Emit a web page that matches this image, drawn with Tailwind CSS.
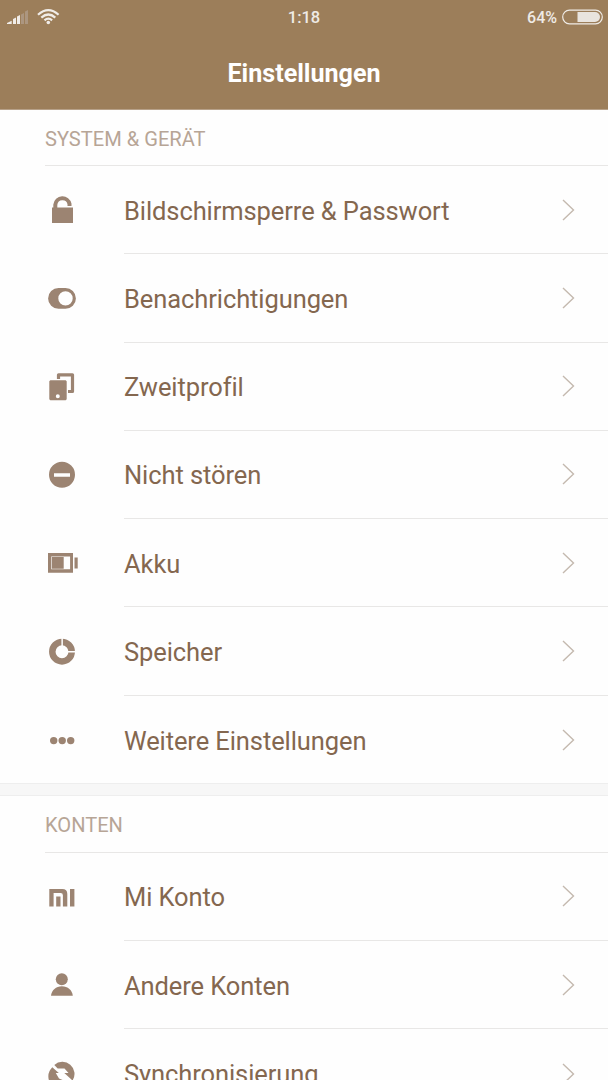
<!DOCTYPE html>
<html lang="de"><head><meta charset="utf-8"><title>Einstellungen</title>
<script src="https://cdn.jsdelivr.net/npm/@tailwindcss/browser@4"></script></head>
<body class="h-[1080px] w-[608px] overflow-hidden bg-[#fefefe] font-['Roboto',sans-serif] text-[#84674f]">
<header class="h-[110px] border-b border-[#b7a189] bg-[#9c7e5a] text-white">
  <div class="grid h-[34px] grid-cols-3 items-center text-[16.500px] font-medium text-[#efebe6]">
    <div class="flex items-center pl-[7px]">
      <svg class="h-[34px] w-[56px]" viewBox="7 0 56 34" fill="#f0ece8"><path d="M7 24v-1l4.700-2.300V24zM13 24v-5l3-1.500V24zM17 24v-7.500l3-1.500v9z"/><path fill="#ac9680" d="M21 24v-9.500l3-1.500v11zM25 24V11.500l3-1.500v14z"/><circle cx="48.300" cy="22.500" r="1.800"/><path fill="none" stroke="#f0ece8" stroke-width="2.200" d="M38 14.700Q48.300 5.400 58.600 14.700M41.300 17.600Q48.300 11.400 55.300 17.600M44.500 20.400Q48.300 16.800 52.100 20.400"/></svg>
    </div>
    <div class="pt-[2px] text-center">1:18</div>
    <div class="flex items-center justify-end gap-[5px] pr-[5px]"><span class="pt-px text-[16px]">64%</span>
      <svg class="h-[16px] w-[41px]" viewBox="0 0 41 16"><rect x=".7" y="1.200" width="39.600" height="13.600" rx="6.800" fill="none" stroke="#efebe6" stroke-width="1.200"/><path fill="#e9e4de" d="M15.500 3H33a5 5 0 0 1 0 10H15.500z"/></svg>
    </div>
  </div>
  <h1 class="pt-[21px] text-center text-[25.100px] leading-[38px] font-bold">Einstellungen</h1>
</header>
<main id="list"></main>
<script>
const icons = {
lock:'<path d="M8 15.500h21V31H8z"/><path fill="none" stroke="currentColor" stroke-width="4" d="M11.300 16v-3.300a7.200 7.200 0 0 1 14.200-.700V14"/>',
toggle:'<path fill-rule="evenodd" d="M14.500 8h7a10.400 10.400 0 0 1 0 20.800h-7a10.400 10.400 0 0 1 0-20.800zM21.500 11.200a7.200 7.200 0 1 0 0 14.400a7.200 7.200 0 0 0 0-14.400z"/>',
copy:'<path fill-rule="evenodd" d="M6.300 11.300h15.400l1 1v18l-1 1H6.300l-1-1v-18zM13.800 25.300a2 2 0 1 0 0 4a2 2 0 0 0 0-4z"/><path fill="none" stroke="currentColor" stroke-width="3.200" stroke-linejoin="round" d="M14.500 10V5.800h14v16.700H24"/>',
dnd:'<path fill-rule="evenodd" d="M18 4.800a13 13 0 1 0 0 26a13 13 0 0 0 0-26zM10 16.200h16v3.500H10z"/>',
battery:'<path fill-rule="evenodd" d="M4 8h25v19.700H4zM7.200 11.500v12.800h18.900V11.500z"/><path d="M7.800 12.100h11.900v11.600H7.800zM30.500 12.600h3.200v11h-3.200z"/>',
storage:'<circle cx="18" cy="18.700" r="9.700" fill="none" stroke="currentColor" stroke-width="6.500"/><path fill="#fefefe" d="M17.400 4h1.500v9h-1.500zM23 18.100h9v1.500h-9z"/>',
dots:'<circle cx="9.700" cy="18.600" r="3.700"/><circle cx="18.200" cy="18.600" r="3.700"/><circle cx="26.700" cy="18.600" r="3.700"/>',
mi:'<path d="M5.300 10.100h13q5 0 5 5v12.300h-4.400V16.200q0-2.300-2.300-2.300H9.600v13.500H5.300zM12.200 17.400h4.300v10h-4.300zM26 10.100h4.400v17.300H26z"/>',
person:'<circle cx="17.800" cy="12.200" r="6"/><path d="M7 28.700c.5-5.500 5-9.500 10.900-9.500s10.400 4 10.900 9.500z"/>',
sync:'<path d="M10.300 9.100A12 12 0 0 1 28.500 24.500L20.300 17h4.200l-4-4.500h-6.800zM8.300 11.200L14.800 17h-3l3.200 5.500 6 2.500 4.500 4.500A12 12 0 0 1 8.300 11.200z"/>'};
const groups=[['SYSTEM & GERÄT',[['lock','Bildschirmsperre & Passwort'],['toggle','Benachrichtigungen'],['copy','Zweitprofil'],['dnd','Nicht stören'],['battery','Akku'],['storage','Speicher'],['dots','Weitere Einstellungen']]],
['KONTEN',[['mi','Mi Konto'],['person','Andere Konten'],['sync','Synchronisierung']]]];
const esc=s=>s.replace('&','&amp;');
document.getElementById('list').innerHTML=groups.map(([t,rows],g)=>`
<section>${g?'<div class="-mt-px h-[13px] border-y border-[#eeeeee] bg-[#f7f7f7]"></div>':''}
<h2 class="ml-[45px] border-b border-[#e8e7e6] text-[20.100px] leading-[58px] text-[#b7a596] ${g?'h-[57px]':'h-[56px]'}">${esc(t)}</h2>
${rows.map(([i,l],n)=>`<div class="flex h-[88.280px] items-center pl-[44px]">
<svg class="size-[36px] shrink-0 text-[#9c8472]" viewBox="0 0 36 36" fill="currentColor">${icons[i]}</svg>
<div class="ml-[44px] flex h-full flex-1 items-center justify-between pr-[32px] ${n<rows.length-1?'border-b border-[#e8e7e6]':''}"><span class="pt-[2px] text-[25.500px] tracking-[-0.090px] whitespace-nowrap">${esc(l)}</span>
<svg class="h-[24px] w-[14px]" viewBox="0 0 14 24" fill="none" stroke="#c4b9af" stroke-width="1.400"><path d="M1 2l10.500 10L1 22"/></svg></div></div>`).join('')}</section>`).join('');
</script>
</body></html>
